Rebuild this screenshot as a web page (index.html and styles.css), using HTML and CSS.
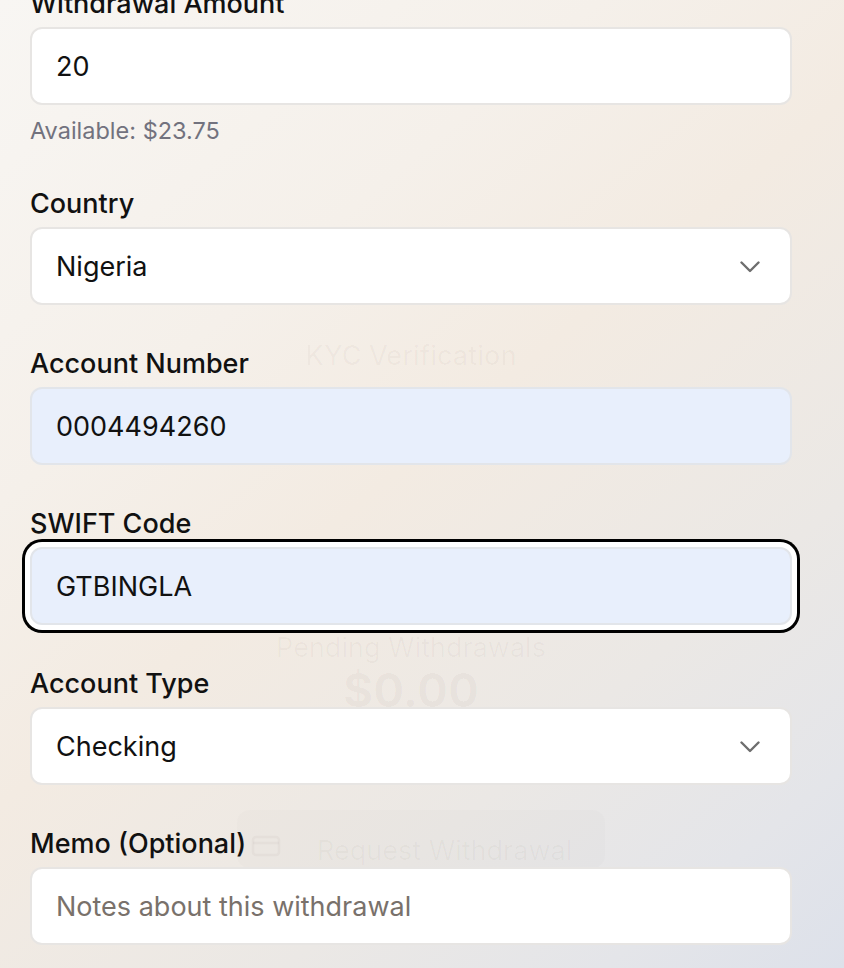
FILE: index.html
```html
<!DOCTYPE html>
<html lang="en">
<head>
<meta charset="utf-8">
<title>Withdrawal</title>
<link rel="stylesheet" href="styles.css">
</head>
<body>
<div class="ghost" aria-hidden="true">
  <div class="ghost-kyc">KYC Verification</div>
  <div class="ghost-pending">Pending Withdrawals</div>
  <div class="ghost-amount">$0.00</div>
  <div class="ghost-btn">
    <svg width="30" height="22" viewBox="0 0 30 22"><rect x="2" y="2" width="26" height="18" rx="3" fill="none" stroke="currentColor" stroke-width="2.5"/><line x1="2" y1="8" x2="28" y2="8" stroke="currentColor" stroke-width="2.5"/></svg>
    <span>Request Withdrawal</span>
  </div>
</div>
<form class="form">
  <div class="field">
    <label class="label">Withdrawal Amount</label>
    <input class="control" type="text" value="20">
    <div class="hint">Available: $23.75</div>
  </div>
  <div class="field">
    <label class="label">Country</label>
    <div class="control select"><span>Nigeria</span>
      <svg class="chev" width="20" height="12" viewBox="0 0 20 12"><path d="M1.5 1.5 L10 10 L18.5 1.5" fill="none" stroke="#6e6e6e" stroke-width="2.4" stroke-linecap="round" stroke-linejoin="round"/></svg>
    </div>
  </div>
  <div class="field">
    <label class="label">Account Number</label>
    <input class="control autofill" type="text" value="0004494260">
  </div>
  <div class="field">
    <label class="label">SWIFT Code</label>
    <input class="control autofill focused" type="text" value="GTBINGLA">
  </div>
  <div class="field">
    <label class="label">Account Type</label>
    <div class="control select"><span>Checking</span>
      <svg class="chev" width="20" height="12" viewBox="0 0 20 12"><path d="M1.5 1.5 L10 10 L18.5 1.5" fill="none" stroke="#6e6e6e" stroke-width="2.4" stroke-linecap="round" stroke-linejoin="round"/></svg>
    </div>
  </div>
  <div class="field">
    <label class="label">Memo (Optional)</label>
    <input class="control" type="text" placeholder="Notes about this withdrawal">
  </div>
</form>
</body>
</html>
```
FILE: styles.css
```css
html, body {
  margin: 0;
  padding: 0;
}
body {
  width: 844px;
  height: 968px;
  overflow: hidden;
  position: relative;
  font-family: Inter, "Noto Sans", sans-serif;
  color: #111;
  background: linear-gradient(140deg, #f8f6f3 0%, #f5f0ea 30%, #f3ebe2 48%, #ebe8e5 72%, #e4e5e9 88%, #dde1ea 100%);
}
.ghost {
  position: absolute;
  left: 0;
  top: 0;
  width: 822px;
  display: flex;
  flex-direction: column;
  align-items: center;
  color: rgba(60, 40, 20, 0.03);
  pointer-events: none;
}
.ghost-kyc {
  margin-top: 340px;
  font-size: 27px;
  line-height: 32px;
  font-weight: 500;
}
.ghost-pending {
  margin-top: 258px;
  font-size: 27px;
  line-height: 36px;
}
.ghost-amount {
  margin-top: -4px;
  font-size: 46px;
  line-height: 56px;
  font-weight: 700;
}
.ghost-btn {
  margin-top: 92px;
  margin-left: 20px;
  width: 368px;
  height: 58px;
  border-radius: 12px;
  background: rgba(0, 0, 0, 0.01);
  display: flex;
  align-items: center;
  gap: 36px;
  padding: 0 14px;
  box-sizing: border-box;
  font-size: 27px;
}
.ghost-btn svg {
  margin-top: 14px;
}
.ghost-btn span {
  margin-top: 22px;
}
.form {
  position: relative;
  margin: -11px 52px 0 30px;
  display: flex;
  flex-direction: column;
}
.field {
  display: flex;
  flex-direction: column;
  margin-bottom: 44px;
}
.label {
  font-size: 27px;
  line-height: 30px;
  font-weight: 500;
  color: #111;
  margin-bottom: 8px;
}
.control {
  box-sizing: border-box;
  height: 78px;
  width: 100%;
  border: 2px solid #e7e5e3;
  border-radius: 12px;
  background: #fff;
  padding: 0 24px;
  font-family: Inter, "Noto Sans", sans-serif;
  font-size: 27px;
  color: #111;
  outline: none;
  margin: 0;
}
.control::placeholder {
  color: #79716b;
}
.select {
  display: flex;
  align-items: center;
  justify-content: space-between;
  padding-right: 30px;
}
.chev {
  margin-top: 2px;
}
.autofill {
  background: #e8effc;
  border-color: #e2e5ea;
}
.focused {
  box-shadow: 0 0 0 5px #fff, 0 0 0 8px #000;
}
.hint {
  margin-top: 13px;
  margin-bottom: 1px;
  font-size: 23.5px;
  line-height: 26px;
  color: #72727e;
}
```
